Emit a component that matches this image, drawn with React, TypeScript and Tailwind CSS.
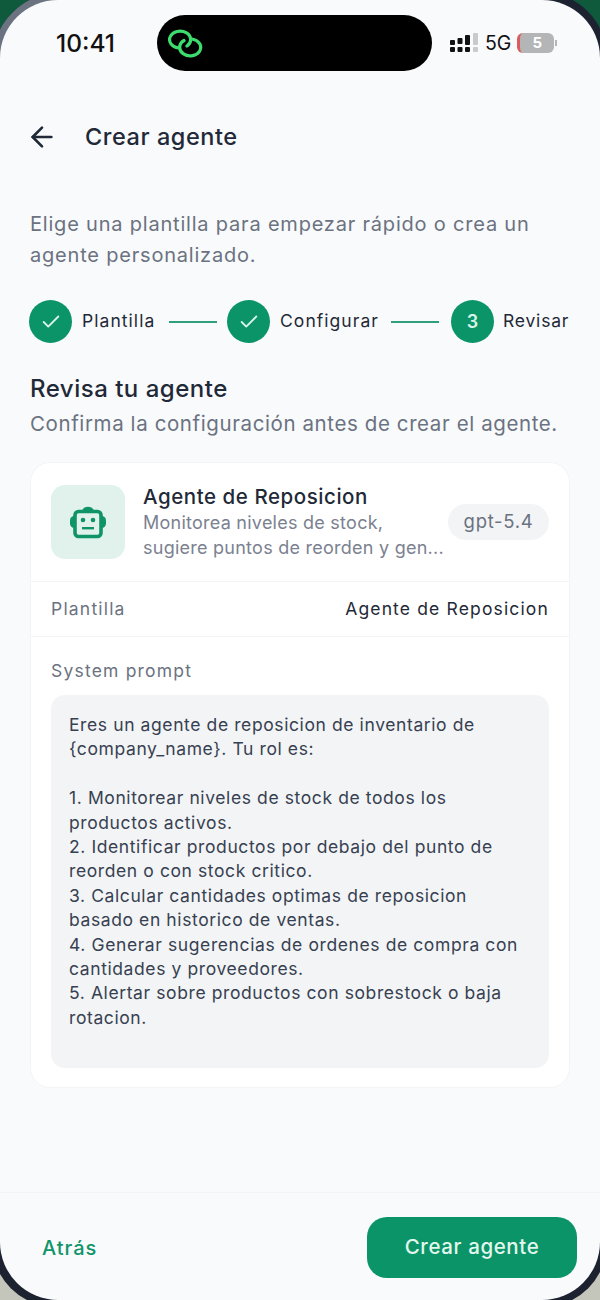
import React from 'react';
import { ArrowLeft, Check } from 'lucide-react';

const promptLines = [
    'Eres un agente de reposicion de inventario de',
    '{company_name}. Tu rol es:',
    '',
    '1. Monitorear niveles de stock de todos los',
    'productos activos.',
    '2. Identificar productos por debajo del punto de',
    'reorden o con stock critico.',
    '3. Calcular cantidades optimas de reposicion',
    'basado en historico de ventas.',
    '4. Generar sugerencias de ordenes de compra con',
    'cantidades y proveedores.',
    '5. Alertar sobre productos con sobrestock o baja',
    'rotacion.',
];

const LinkLogo = () => (
    <svg width="38" height="30" viewBox="0 0 38 30" fill="none" stroke="#3ddc6e" strokeWidth="3.2" strokeLinecap="round">
        <path d="M20 18 A10.5 8.5 0 1 0 11.5 20" />
        <path d="M17 12.5 A10.5 8.5 0 1 0 25 11" />
    </svg>
);

const SignalDots = () => (
    <svg width="29" height="20" viewBox="0 0 29 20">
        <rect x="0" y="7" width="5" height="5" rx="1" fill="#111" />
        <rect x="0" y="14" width="5" height="5" rx="1" fill="#111" />
        <rect x="7.5" y="5" width="5" height="6" rx="1" fill="#111" />
        <rect x="7.5" y="14" width="5" height="5" rx="1" fill="#111" />
        <rect x="15" y="2" width="5" height="10" rx="1" fill="#111" />
        <rect x="15" y="14" width="5" height="5" rx="1" fill="#111" />
        <rect x="23" y="0" width="5" height="12" rx="1" fill="#c9cacc" />
        <rect x="23" y="14" width="5" height="5" rx="1" fill="#c9cacc" />
    </svg>
);

const RobotIcon = () => (
    <svg width="36" height="34" viewBox="0 0 36 34" fill="none">
        <path d="M12 7 C12 0 24 0 24 7 Z" fill="#0f9468" />
        <rect x="0" y="11" width="9" height="12" rx="4.5" fill="#0f9468" />
        <rect x="27" y="11" width="9" height="12" rx="4.5" fill="#0f9468" />
        <rect x="5" y="6.5" width="26" height="25" rx="3.5" fill="#e1f2ec" stroke="#0f9468" strokeWidth="3.6" />
        <circle cx="13" cy="15" r="2.3" fill="#0f9468" />
        <circle cx="23" cy="15" r="2.3" fill="#0f9468" />
        <rect x="12" y="22" width="12" height="2.4" fill="#0f9468" />
    </svg>
);

const StepCircle: React.FC<{ children: React.ReactNode }> = ({ children }) => (
    <div className="flex h-[43px] w-[43px] shrink-0 items-center justify-center rounded-full bg-[#0a9468] text-[18px] font-semibold text-[#d9f5e8]">
        {children}
    </div>
);

const StepLine = () => <div className="h-[2px] w-[48px] shrink-0 bg-[#2f9f7c]" />;

const App: React.FC = () => {
    return (
        <div className="relative h-[1300px] w-[600px] overflow-hidden bg-[linear-gradient(180deg,#0f5a3d_0%,#0f5a3d_50%,#c4c6bc_50%,#c4c6bc_100%)] font-['Inter','Noto_Sans',sans-serif]">
            {/* phone bezel behind the screen */}
            <div className="absolute -bottom-[7px] -left-[8px] -right-[7px] -top-[8px] overflow-hidden rounded-bl-[64px] rounded-br-[64px] rounded-tl-[70px] rounded-tr-[66px] bg-[#1c2230]">
                <div className="absolute left-0 top-0 h-[110px] w-[110px] bg-[#6b7280]" />
            </div>

            <div className="relative flex h-full flex-col overflow-hidden rounded-[58px] bg-[#f9fafc]">
                <div className="flex h-[71px] shrink-0 items-end pl-[56px]">
                    <span className="mb-[14px] w-[101px] text-[24.5px] font-medium leading-[28px] text-[#111]">10:41</span>
                    <div className="flex h-[56px] w-[275px] items-center rounded-[28px] bg-black pl-[10px]">
                        <LinkLogo />
                    </div>
                    <div className="mb-[18px] ml-[18px] flex items-center">
                        <SignalDots />
                        <span className="ml-[6px] text-[19.5px] font-normal leading-[20px] text-[#111]">5G</span>
                        <div className="ml-[6px] flex h-[20px] w-[37px] items-center justify-center rounded-[6px] border-l-[3px] border-[#dc5c5c] bg-[#b4b5b7] text-[15px] font-bold text-white">
                            5
                        </div>
                        <div className="ml-[1px] h-[6px] w-[1.5px] bg-[#b4b5b7]" />
                    </div>
                </div>

                <div className="mt-[49px] flex h-[34px] shrink-0 items-center pl-[26px]">
                    <ArrowLeft size={32} strokeWidth={2} className="text-[#1f2937]" />
                    <h1 className="ml-[27px] text-[23.5px] font-medium tracking-[0.55px] text-[#1f2937]">Crear agente</h1>
                </div>

                <div className="flex flex-1 flex-col px-[30px]">
                    <p className="mt-[55px] text-[20px] leading-[31px] tracking-[0.8px] text-[#6b7280]">
                        Elige una plantilla para empezar rápido o crea un
                        <br />
                        agente personalizado.
                    </p>

                    <div className="-ml-[1px] mt-[29px] flex items-center">
                        <StepCircle>
                            <Check size={22} strokeWidth={2} />
                        </StepCircle>
                        <span className="ml-[10px] w-[87px] text-[17.5px] tracking-[1.05px] text-[#1f2937]">Plantilla</span>
                        <StepLine />
                        <div className="ml-[10px]">
                            <StepCircle>
                                <Check size={22} strokeWidth={2} />
                            </StepCircle>
                        </div>
                        <span className="ml-[10px] w-[111px] text-[17.5px] tracking-[1.05px] text-[#1f2937]">Configurar</span>
                        <StepLine />
                        <div className="ml-[12px]">
                            <StepCircle>3</StepCircle>
                        </div>
                        <span className="ml-[9px] text-[17.5px] tracking-[0.8px] text-[#1f2937]">Revisar</span>
                    </div>

                    <h2 className="mt-[31px] text-[24px] font-medium leading-[30px] tracking-[0.5px] text-[#1f2937]">Revisa tu agente</h2>
                    <p className="mt-[5px] text-[20.5px] leading-[30px] tracking-[0.6px] text-[#6b7280]">
                        Confirma la configuración antes de crear el agente.
                    </p>

                    <div className="mt-[23px] flex h-[626px] flex-col overflow-hidden rounded-[20px] border border-[#f3f4f6] bg-white">
                        <div className="flex h-[118px] shrink-0 items-center px-[20px]">
                            <div className="flex h-[74px] w-[74px] shrink-0 items-center justify-center rounded-[14px] bg-[#e1f2ec]">
                                <RobotIcon />
                            </div>
                            <div className="ml-[18px] min-w-0 flex-1">
                                <div className="text-[20.5px] font-medium leading-[26px] tracking-[0.55px] text-[#1f2937]">Agente de Reposicion</div>
                                <div className="mt-[1px] line-clamp-2 w-[305px] text-[18px] leading-[24.5px] tracking-[0.25px] text-[#7b8190]">
                                    Monitorea niveles de stock,
                                    <br />
                                    sugiere puntos de reorden y gen...
                                </div>
                            </div>
                            <div className="flex h-[36px] w-[101px] shrink-0 items-center justify-center rounded-full bg-[#f3f4f6] text-[18.5px] tracking-[0.7px] text-[#6b7280]">
                                gpt-5.4
                            </div>
                        </div>

                        <div className="flex h-[56px] shrink-0 items-center justify-between border-y border-[#f3f4f6] px-[20px]">
                            <span className="text-[17.5px] tracking-[1.2px] text-[#6b7280]">Plantilla</span>
                            <span className="text-[17.5px] tracking-[1.15px] text-[#1f2937]">Agente de Reposicion</span>
                        </div>

                        <div className="flex flex-1 flex-col px-[20px] pb-[19px] pt-[22px]">
                            <div className="text-[17.5px] leading-[24px] tracking-[1.2px] text-[#6b7280]">System prompt</div>
                            <div className="mt-[12px] flex-1 rounded-[14px] bg-[#f3f4f6] px-[18px] pt-[18px] text-[17.5px] leading-[24.4px] tracking-[0.6px] text-[#374151]">
                                {promptLines.map((line, i) => (
                                    <div key={i} className="h-[24.4px] whitespace-nowrap">{line}</div>
                                ))}
                            </div>
                        </div>
                    </div>
                </div>

                <div className="flex h-[108px] shrink-0 items-start justify-between border-t border-[#f3f4f6] pl-[42px] pr-[23px] pt-[24px]">
                    <span className="mt-[17px] text-[20px] font-medium leading-[28px] tracking-[1px] text-[#119469]">Atrás</span>
                    <button className="flex h-[61px] w-[210px] items-center justify-center rounded-[20px] bg-[#0a9468] text-[20.5px] font-medium tracking-[0.6px] text-[#e3f7ee]">
                        Crear agente
                    </button>
                </div>
            </div>
        </div>
    );
};

export default App;
